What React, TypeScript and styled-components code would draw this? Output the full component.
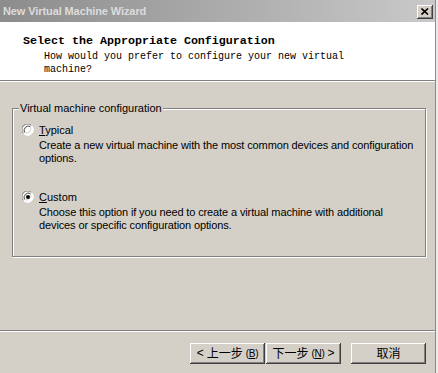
import styled, { createGlobalStyle } from "styled-components";

const GlobalStyle = createGlobalStyle`
  html, body {
    margin: 0;
    padding: 0;
    background: #ecebe8;
  }
  #root {
    width: 438px;
    height: 373px;
    overflow: hidden;
  }
`;

const Window = styled.div`
  width: 435px;
  height: 373px;
  border-right: 1px solid #8a8a8a;
  background: #d4d0c8;
  display: flex;
  flex-direction: column;
  font-family: "Liberation Sans", Arial, sans-serif;
  color: #000;
`;

const TitleBar = styled.div`
  height: 22px;
  flex-shrink: 0;
  display: flex;
  align-items: center;
  justify-content: space-between;
  padding: 0 2px 0 3px;
  background: linear-gradient(to right, #8c8c8c, #c9c9c9);
  box-sizing: border-box;
`;

const TitleText = styled.span`
  font-size: 11px;
  font-weight: bold;
  color: #dcdcdc;
  letter-spacing: -0.1px;
`;

const CloseButton = styled.button`
  width: 16px;
  height: 14px;
  padding: 0;
  margin-top: 1px;
  border: none;
  background: #d4d0c8;
  display: flex;
  align-items: center;
  justify-content: center;
  box-shadow: inset -1px -1px #404040, inset 1px 1px #fff,
    inset -2px -2px #808080;
`;

const Header = styled.div`
  height: 59px;
  flex-shrink: 0;
  background: #fff;
  border-bottom: 1px solid #808080;
  padding: 12px 0 0 23px;
  box-sizing: border-box;
  font-family: "Liberation Mono", "Courier New", monospace;
`;

const HeaderTitle = styled.div`
  font-size: 11.67px;
  font-weight: bold;
  line-height: 14px;
  margin-bottom: 2px;
`;

const HeaderSub = styled.div`
  font-size: 10px;
  line-height: 13px;
  padding-left: 21px;
  width: 310px;
`;

const Body = styled.div`
  flex: 1;
  border-top: 1px solid #fff;
  padding-top: 19px;
`;

const Group = styled.fieldset`
  margin: 0 9px 0 12px;
  padding: 0 0 24px 9px;
  border: 1px solid #808080;
  box-shadow: inset 1px 1px #fff, 1px 1px #fff;
  min-width: 0;
`;

const Legend = styled.legend`
  font-size: 11px;
  line-height: 14px;
  padding: 0 1px;
  margin-left: -3px;
  background: #d4d0c8;
`;

const Option = styled.div<{ $first?: boolean }>`
  margin-top: ${(p) => (p.$first ? "8px" : "25px")};
`;

const RadioRow = styled.label`
  display: flex;
  align-items: center;
  gap: 5px;
  height: 13px;
  font-size: 11px;
`;

const Accel = styled.span`
  text-decoration: underline;
`;

const Desc = styled.div`
  font-size: 11px;
  line-height: 13px;
  padding-left: 17px;
  margin-top: 3px;
  white-space: nowrap;
  letter-spacing: -0.12px;
`;

const Footer = styled.div`
  height: 43px;
  flex-shrink: 0;
  border-top: 1px solid #808080;
  box-shadow: inset 0 1px #fff;
  display: flex;
  justify-content: flex-end;
  align-items: flex-start;
  padding: 12px 9px 0 0;
  box-sizing: border-box;
`;

const Button = styled.button<{ $gapAfter?: number }>`
  width: 75px;
  height: 21px;
  margin-right: ${(p) => p.$gapAfter ?? 0}px;
  padding: 0 0 1px;
  border: none;
  background: #d4d0c8;
  font-family: "Liberation Sans", "Noto Sans CJK SC", sans-serif;
  font-size: 12px;
  color: #000;
  display: flex;
  align-items: center;
  justify-content: center;
  gap: 3px;
  box-shadow: inset -1px -1px #404040, inset 1px 1px #fff,
    inset -2px -2px #808080;
`;

const Cjk = styled.span`
  font-family: "Noto Sans CJK SC", sans-serif;
  font-size: 12px;
  line-height: 14px;
`;

const Key = styled.span`
  font-family: "Liberation Sans", sans-serif;
  font-size: 10px;
  letter-spacing: -0.3px;
`;

const Radio = ({ checked }: { checked?: boolean }) => (
  <svg width="12" height="12" viewBox="0 0 12 12">
    <circle cx="6" cy="6" r="5.5" fill="#fff" />
    <path d="M1.5 9.5 A5.5 5.5 0 0 1 9.5 1.5" stroke="#808080" fill="none" />
    <path d="M9.5 1.5 A5.5 5.5 0 0 1 1.5 9.5" stroke="#fff" fill="none" />
    <path d="M2.5 8.5 A4.5 4.5 0 0 1 8.5 2.5" stroke="#404040" fill="none" />
    <path d="M8.5 2.5 A4.5 4.5 0 0 1 2.5 8.5" stroke="#d4d0c8" fill="none" />
    {checked && <circle cx="6" cy="6" r="2" fill="#000" />}
  </svg>
);

export default function App() {
  return (
    <>
      <GlobalStyle />
      <Window>
        <TitleBar>
          <TitleText>New Virtual Machine Wizard</TitleText>
          <CloseButton aria-label="close">
            <svg width="8" height="7" viewBox="0 0 8 7">
              <path d="M0.5 0.5 L7 6.5 M7 0.5 L0.5 6.5" stroke="#000" strokeWidth="1.6" />
            </svg>
          </CloseButton>
        </TitleBar>
        <Header>
          <HeaderTitle>Select the Appropriate Configuration</HeaderTitle>
          <HeaderSub>
            How would you prefer to configure your new virtual machine?
          </HeaderSub>
        </Header>
        <Body>
          <Group>
            <Legend>Virtual machine configuration</Legend>
            <Option $first>
              <RadioRow>
                <Radio />
                <span>
                  <Accel>T</Accel>ypical
                </span>
              </RadioRow>
              <Desc>
                Create a new virtual machine with the most common devices and
                configuration
                <br />
                options.
              </Desc>
            </Option>
            <Option>
              <RadioRow>
                <Radio checked />
                <span>
                  <Accel>C</Accel>ustom
                </span>
              </RadioRow>
              <Desc>
                Choose this option if you need to create a virtual machine with
                additional
                <br />
                devices or specific configuration options.
              </Desc>
            </Option>
          </Group>
        </Body>
        <Footer>
          <Button $gapAfter={1}>
            &lt; <Cjk>上一步</Cjk>
            <Key>
              (<Accel>B</Accel>)
            </Key>
          </Button>
          <Button $gapAfter={10}>
            <Cjk>下一步</Cjk>
            <Key>
              (<Accel>N</Accel>)
            </Key>
            &gt;
          </Button>
          <Button>
            <Cjk>取消</Cjk>
          </Button>
        </Footer>
      </Window>
    </>
  );
}
